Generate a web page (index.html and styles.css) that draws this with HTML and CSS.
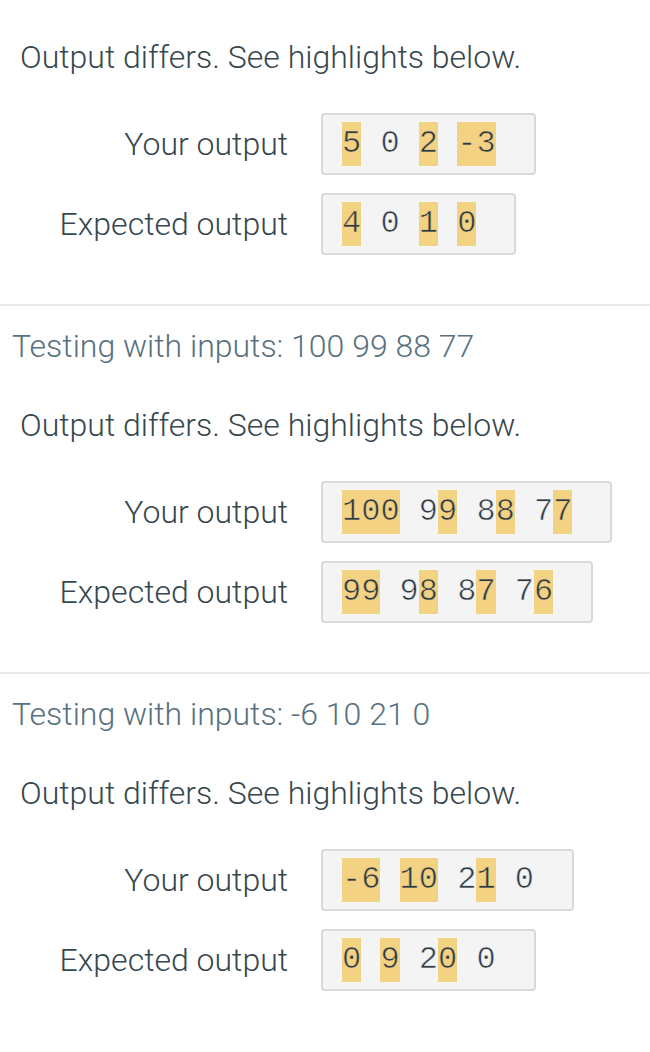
FILE: index.html
```html
<!DOCTYPE html>
<html>
<head>
<meta charset="utf-8">
<link rel="stylesheet" href="styles.css">
</head>
<body>
<div class="page">
  <section class="test first">
    <p class="status">Output differs. See highlights below.</p>
    <div class="compare">
      <div class="label">Your output</div>
      <div class="box"><span class="hl">5</span> 0 <span class="hl">2</span> <span class="hl">-3</span></div>
      <div class="label">Expected output</div>
      <div class="box"><span class="hl">4</span> 0 <span class="hl">1</span> <span class="hl">0</span></div>
    </div>
  </section>
  <section class="test">
    <h3 class="inputs">Testing with inputs: 100 99 88 77</h3>
    <p class="status">Output differs. See highlights below.</p>
    <div class="compare">
      <div class="label">Your output</div>
      <div class="box"><span class="hl">100</span> 9<span class="hl">9</span> 8<span class="hl">8</span> 7<span class="hl">7</span></div>
      <div class="label">Expected output</div>
      <div class="box"><span class="hl">99</span> 9<span class="hl">8</span> 8<span class="hl">7</span> 7<span class="hl">6</span></div>
    </div>
  </section>
  <section class="test">
    <h3 class="inputs">Testing with inputs: -6 10 21 0</h3>
    <p class="status">Output differs. See highlights below.</p>
    <div class="compare">
      <div class="label">Your output</div>
      <div class="box"><span class="hl">-6</span> <span class="hl">10</span> 2<span class="hl">1</span> 0</div>
      <div class="label">Expected output</div>
      <div class="box"><span class="hl">0</span> <span class="hl">9</span> 2<span class="hl">0</span> 0</div>
    </div>
  </section>
</div>
</body>
</html>
```
FILE: styles.css
```css
html, body {
  margin: 0;
  padding: 0;
  background: #ffffff;
}

body {
  font-family: Roboto, "Liberation Sans", sans-serif;
  font-weight: 300;
  font-size: 32px;
  line-height: 40px;
  color: #37474f;
}

.test {
  padding: 20px 0 49px 0;
  border-top: 2px solid #e8e8e8;
}

.test.first {
  border-top: none;
  padding-top: 37px;
}

.inputs {
  margin: 0 0 39px 0;
  padding-left: 12px;
  font-size: 32px;
  font-weight: 300;
  line-height: 40px;
  color: #577180;
}

.status {
  margin: 0 0 36px 0;
  padding-left: 20px;
}

.compare {
  display: grid;
  grid-template-columns: 288px auto;
  column-gap: 33px;
  row-gap: 18px;
  align-items: center;
  justify-items: start;
}

.label {
  justify-self: end;
  color: #37474f;
}

.box {
  font-family: "Liberation Mono", monospace;
  font-weight: 400;
  font-size: 32px;
  line-height: 44px;
  height: 44px;
  white-space: pre;
  color: #2c3c46;
  -webkit-text-stroke: 0.6px #f4f4f4;
  background: #f4f4f4;
  border: 2px solid #d9d9d9;
  border-radius: 4px;
  padding: 7px 38px 7px 19px;
}

.hl {
  display: inline-block;
  background: #f3d383;
  -webkit-text-stroke: 0.6px #f3d383;
  line-height: 44px;
  height: 44px;
  vertical-align: top;
}
```
